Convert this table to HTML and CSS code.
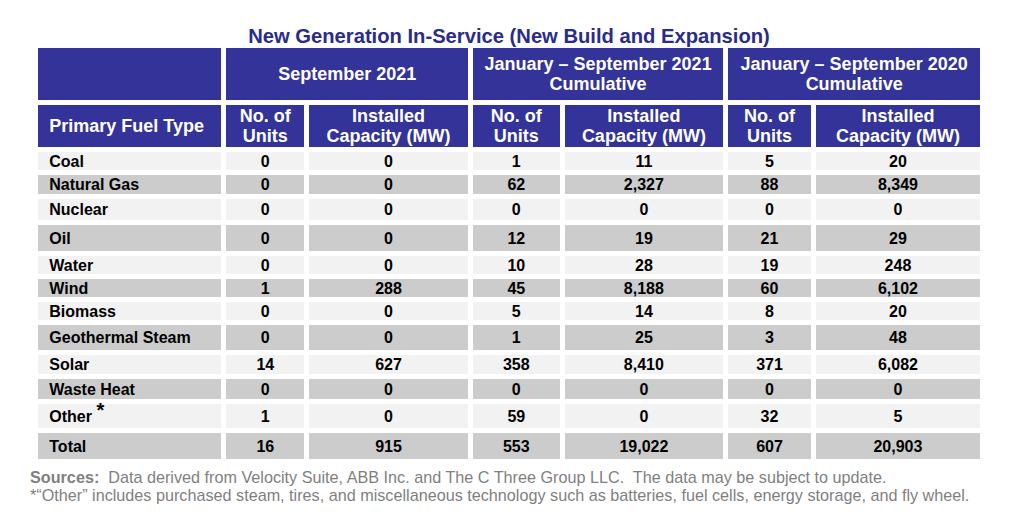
FILE: index.html
```html
<!DOCTYPE html>
<html lang="en">
<head>
<meta charset="utf-8">
<title>New Generation In-Service</title>
<link rel="stylesheet" href="styles.css">
</head>
<body>
<div class="page">
  <h1 class="title">New Generation In-Service (New Build and Expansion)</h1>
  <table class="gen">
    <colgroup>
      <col class="c-fuel"><col class="c-u1"><col class="c-m1"><col class="c-u2"><col class="c-m2"><col class="c-u3"><col class="c-m3">
    </colgroup>
    <thead>
      <tr class="h-top">
        <th></th>
        <th colspan="2">September 2021</th>
        <th colspan="2">January – September 2021<br>Cumulative</th>
        <th colspan="2">January – September 2020<br>Cumulative</th>
      </tr>
      <tr class="h-sub">
        <th class="fuel">Primary Fuel Type</th>
        <th>No. of<br>Units</th>
        <th>Installed<br>Capacity (MW)</th>
        <th>No. of<br>Units</th>
        <th>Installed<br>Capacity (MW)</th>
        <th>No. of<br>Units</th>
        <th>Installed<br>Capacity (MW)</th>
      </tr>
    </thead>
    <tbody>
      <tr class="lt r-coal"><td class="fuel">Coal</td><td>0</td><td>0</td><td>1</td><td>11</td><td>5</td><td>20</td></tr>
      <tr class="dk r-gas"><td class="fuel">Natural Gas</td><td>0</td><td>0</td><td>62</td><td>2,327</td><td>88</td><td>8,349</td></tr>
      <tr class="lt r-nuc"><td class="fuel">Nuclear</td><td>0</td><td>0</td><td>0</td><td>0</td><td>0</td><td>0</td></tr>
      <tr class="dk r-oil"><td class="fuel">Oil</td><td>0</td><td>0</td><td>12</td><td>19</td><td>21</td><td>29</td></tr>
      <tr class="lt r-water"><td class="fuel">Water</td><td>0</td><td>0</td><td>10</td><td>28</td><td>19</td><td>248</td></tr>
      <tr class="dk r-wind"><td class="fuel">Wind</td><td>1</td><td>288</td><td>45</td><td>8,188</td><td>60</td><td>6,102</td></tr>
      <tr class="lt r-bio"><td class="fuel">Biomass</td><td>0</td><td>0</td><td>5</td><td>14</td><td>8</td><td>20</td></tr>
      <tr class="dk r-geo"><td class="fuel">Geothermal Steam</td><td>0</td><td>0</td><td>1</td><td>25</td><td>3</td><td>48</td></tr>
      <tr class="lt r-solar"><td class="fuel">Solar</td><td>14</td><td>627</td><td>358</td><td>8,410</td><td>371</td><td>6,082</td></tr>
      <tr class="dk r-waste"><td class="fuel">Waste Heat</td><td>0</td><td>0</td><td>0</td><td>0</td><td>0</td><td>0</td></tr>
      <tr class="lt r-other"><td class="fuel">Other <sup class="star">*</sup></td><td>1</td><td>0</td><td>59</td><td>0</td><td>32</td><td>5</td></tr>
      <tr class="dk r-total"><td class="fuel">Total</td><td>16</td><td>915</td><td>553</td><td>19,022</td><td>607</td><td>20,903</td></tr>
    </tbody>
  </table>
  <div class="notes">
    <p><b>Sources:</b>&nbsp; Data derived from Velocity Suite, ABB Inc. and The C Three Group LLC.&nbsp; The data may be subject to update.</p>
    <p>*“Other” includes purchased steam, tires, and miscellaneous technology such as batteries, fuel cells, energy storage, and fly wheel.</p>
  </div>
</div>
</body>
</html>
```

FILE: styles.css
```css
html, body {
  margin: 0;
  padding: 0;
  background: #ffffff;
}

.page {
  width: 1024px;
  height: 532px;
  box-sizing: border-box;
  padding: 29px 0 0 30px;
  font-family: "Liberation Sans", Arial, sans-serif;
}

.title {
  margin: 0;
  width: 958px;
  text-align: center;
  font-size: 20.2px;
  line-height: 14px;
  font-weight: bold;
  color: #2b2b8c;
}

.gen {
  margin: 0 0 0 2.7px;
  border-collapse: separate;
  border-spacing: 5px 5px;
  table-layout: fixed;
  width: 952.4px;
  font-weight: bold;
}

.c-fuel { width: 183.8px; }
.c-u1 { width: 77.6px; }
.c-m1 { width: 158.9px; }
.c-u2 { width: 86.6px; }
.c-m2 { width: 158.6px; }
.c-u3 { width: 82.6px; }
.c-m3 { width: 164.3px; }

.gen th {
  background: #333399;
  color: #ffffff;
  font-size: 18px;
  line-height: 20.5px;
  font-weight: bold;
  text-align: center;
  vertical-align: middle;
  padding: 0;
}

.gen td {
  font-size: 16px;
  line-height: 16px;
  color: #000000;
  text-align: center;
  vertical-align: middle;
  padding: 1px 0 0 0;
}

.gen .fuel {
  text-align: left;
  padding-left: 11.6px;
}

.h-top { height: 52px; }
.h-sub { height: 42px; }

.lt td { background: #f2f2f2; }
.dk td { background: #cccccc; }

.r-coal { height: 18px; }
.r-gas { height: 19px; }
.r-nuc { height: 21px; }
.r-oil { height: 26px; }
.r-water { height: 18px; }
.r-wind { height: 18px; }
.r-bio { height: 18px; }
.r-geo { height: 25px; }
.r-solar { height: 19px; }
.r-waste { height: 20px; }
.r-other { height: 24px; }
.r-total { height: 26px; }

.star {
  font-size: 20px;
  line-height: 0;
  vertical-align: 5px;
}

.notes {
  margin-top: 4px;
  color: #7f7f7f;
  font-size: 16.2px;
  line-height: 18px;
}

.notes p {
  margin: 0;
  white-space: nowrap;
}

.notes b {
  font-weight: bold;
}
```
